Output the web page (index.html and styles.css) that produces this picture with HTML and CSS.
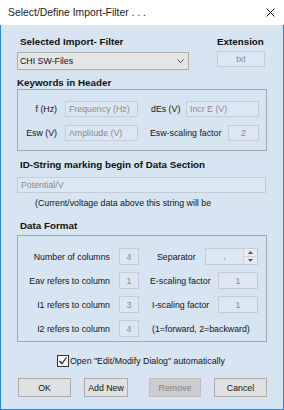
FILE: index.html
```html
<!DOCTYPE html>
<html lang="en">
<head>
  <meta charset="UTF-8">
  <title>Select/Define Import-Filter</title>
  <link rel="stylesheet" href="styles.css">
</head>
<body>
  <div class="window">
    <div class="titlebar">
      <span class="title">Select/Define Import-Filter . . .</span>
      <svg class="close" width="9" height="9" viewBox="0 0 9 9">
        <path d="M0.5 0.5 L8.5 8.5 M8.5 0.5 L0.5 8.5" stroke="#111" stroke-width="1" fill="none"/>
      </svg>
    </div>

    <div class="client">
      <div class="top-row">
        <div class="filter-col">
          <div class="heading">Selected Import- Filter</div>
          <div class="select">
            <span>CHI SW-Files</span>
            <svg width="7" height="4" viewBox="0 0 7 4">
              <path d="M0.5 0.5 L3.5 3.5 L6.5 0.5" stroke="#444" stroke-width="1" fill="none"/>
            </svg>
          </div>
        </div>
        <div class="ext-col">
          <div class="heading plain">Extension</div>
          <div class="field num ext">txt</div>
        </div>
      </div>

      <div class="heading kw">Keywords in Header</div>
      <div class="group keywords">
        <div class="row">
          <span class="lbl1">f (Hz)</span>
          <div class="field wide">Frequency (Hz)</div>
          <span class="lbl2 l-des">dEs (V)</span>
          <div class="field wide">Incr E (V)</div>
        </div>
        <div class="row">
          <span class="lbl1">Esw (V)</span>
          <div class="field wide">Amplitude (V)</div>
          <span class="lbl2 l-esw">Esw-scaling factor</span>
          <div class="field num small">2</div>
        </div>
      </div>

      <div class="heading id">ID-String marking begin of Data Section</div>
      <div class="field idstr">Potential/V</div>
      <p class="note">(Current/voltage data above this string will be</p>

      <div class="heading df">Data Format</div>
      <div class="group format">
        <div class="row">
          <span class="lbl1">Number of columns</span>
          <div class="field num col">4</div>
          <span class="lbl2 l-sep">Separator</span>
          <div class="spin">
            <span class="spin-val">,</span>
            <div class="spin-btns">
              <span class="spin-up"><svg width="5" height="3" viewBox="0 0 5 3"><path d="M0 3 L2.5 0 L5 3 Z" fill="#555"/></svg></span>
              <span class="spin-down"><svg width="5" height="3" viewBox="0 0 5 3"><path d="M0 0 L2.5 3 L5 0 Z" fill="#555"/></svg></span>
            </div>
          </div>
        </div>
        <div class="row">
          <span class="lbl1">Eav refers to column</span>
          <div class="field num col">1</div>
          <span class="lbl2 l-scale">E-scaling factor</span>
          <div class="field num factor">1</div>
        </div>
        <div class="row">
          <span class="lbl1">I1 refers to column</span>
          <div class="field num col">3</div>
          <span class="lbl2 l-scale2">I-scaling factor</span>
          <div class="field num factor">1</div>
        </div>
        <div class="row">
          <span class="lbl1">I2 refers to column</span>
          <div class="field num col">4</div>
          <span class="lbl2 l-scale2">(1=forward, 2=backward)</span>
        </div>
      </div>

      <label class="check">
        <span class="box">
          <svg width="10" height="10" viewBox="0 0 10 10">
            <path d="M1.5 5 L4 7.5 L8.5 1.5" stroke="#222" stroke-width="1.2" fill="none"/>
          </svg>
        </span>
        <span>Open "Edit/Modify Dialog" automatically</span>
      </label>

      <div class="buttons">
        <button type="button" class="btn ok">OK</button>
        <button type="button" class="btn add">Add New</button>
        <button type="button" class="btn remove" disabled>Remove</button>
        <button type="button" class="btn cancel">Cancel</button>
      </div>
    </div>
  </div>
</body>
</html>
```

FILE: styles.css
```css
body {
  margin: 0;
  font-family: "Liberation Sans", Arial, sans-serif;
  font-size: 8.8px;
  color: #141414;
}

.window {
  width: 284px;
  height: 410px;
  display: flex;
  flex-direction: column;
}

.titlebar {
  height: 25px;
  flex-shrink: 0;
  background: #fff;
  display: flex;
  align-items: center;
  justify-content: space-between;
  padding: 0 9px 0 8px;
  font-size: 10.4px;
  color: #222;
}

.client {
  flex: 1;
  background: #d7e4f2;
  border: 1px solid #2a86d6;
  border-top: none;
  padding: 11px 16px 0 16px;
}

.heading {
  font-weight: bold;
  font-size: 9.8px;
  line-height: 12px;
  padding-left: 3px;
  color: #111;
}

.heading.plain {
  padding-left: 0;
}

/* top row */

.top-row {
  display: flex;
}

.filter-col {
  width: 172px;
}

.ext-col {
  width: 48px;
  margin-left: auto;
  margin-right: 2px;
}

.select {
  margin-top: 4px;
  height: 18px;
  box-sizing: border-box;
  border: 1px solid #adadad;
  background: #e5e5e5;
  display: flex;
  align-items: center;
  justify-content: space-between;
  padding: 0 4px 0 2px;
  color: #111;
}

.field {
  box-sizing: border-box;
  height: 16px;
  border: 1px solid #c5ccd3;
  background: #dce7f3;
  color: #8a8a8a;
  padding: 0 3px;
  display: flex;
  align-items: center;
  white-space: nowrap;
}

.field.num {
  justify-content: center;
}

.field.ext {
  margin-top: 3px;
}

/* group boxes */

.group {
  border: 1px solid #a2a8ae;
  display: flex;
  flex-direction: column;
}

.row {
  display: flex;
  align-items: center;
}

.lbl2 {
  flex: 1;
  white-space: nowrap;
}

.heading.kw {
  margin-top: 7px;
  padding-left: 0;
}

.keywords {
  padding: 11px 7px 9px 0;
  gap: 8px;
}

.keywords .lbl1 {
  width: 39px;
  text-align: right;
}

.keywords .field.wide {
  width: 73px;
  margin-left: 8px;
}

.keywords .field.wide:last-child {
  margin-left: 0;
}

.keywords .field.small {
  width: 31px;
}

.l-des {
  margin-left: 13px;
}

.l-esw {
  margin-left: 12px;
}

.heading.id {
  margin-top: 8px;
}

.field.idstr {
  margin-top: 6px;
  width: 249px;
}

.note {
  margin: 4px 0 0 18px;
  line-height: 12px;
}

.heading.df {
  margin-top: 11px;
}

.format {
  margin-top: 3px;
  padding: 12px 8px 4px 0;
  gap: 7px;
}

.format .row {
  height: 17px;
}

.format .lbl1 {
  width: 92px;
  text-align: right;
}

.format .field {
  height: 17px;
}

.field.col {
  width: 20px;
  margin-left: 9px;
}

.field.factor {
  width: 40px;
}

.l-sep {
  margin-left: 18px;
}

.l-scale {
  margin-left: 11px;
}

.l-scale2 {
  margin-left: 13px;
}

.spin {
  width: 53px;
  height: 17px;
  box-sizing: border-box;
  border: 1px solid #c5ccd3;
  background: #dce7f3;
  display: flex;
  color: #8a8a8a;
}

.spin-val {
  flex: 1;
  text-align: center;
  line-height: 15px;
}

.spin-btns {
  width: 13px;
  display: flex;
  flex-direction: column;
  border-left: 1px solid #d0d5da;
}

.spin-btns span {
  flex: 1;
  display: flex;
  align-items: center;
  justify-content: center;
  background: #e6ecf2;
}

.spin-up {
  border-bottom: 1px solid #d0d5da;
}

/* checkbox */

.check {
  display: flex;
  align-items: center;
  gap: 1px;
  margin-top: 13px;
  padding-left: 40px;
  line-height: 12px;
}

.check .box {
  width: 12px;
  height: 12px;
  box-sizing: border-box;
  border: 1px solid #333;
  background: #f4f7fa;
  display: flex;
  align-items: center;
  justify-content: center;
}

/* buttons */

.buttons {
  display: flex;
  margin-top: 11px;
  padding-left: 1px;
}

.btn {
  height: 19px;
  box-sizing: border-box;
  border: 1px solid #adadad;
  background: #e1e1e1;
  font-family: inherit;
  font-size: 8.8px;
  color: #111;
  padding: 0;
}

.btn.ok {
  width: 53px;
}

.btn.add {
  width: 44px;
  margin-left: 13px;
}

.btn.remove {
  width: 52px;
  margin-left: 21px;
  background: #cccccc;
  border-color: #bfbfbf;
  color: #838383;
}

.btn.cancel {
  width: 53px;
  margin-left: 13px;
}
```
